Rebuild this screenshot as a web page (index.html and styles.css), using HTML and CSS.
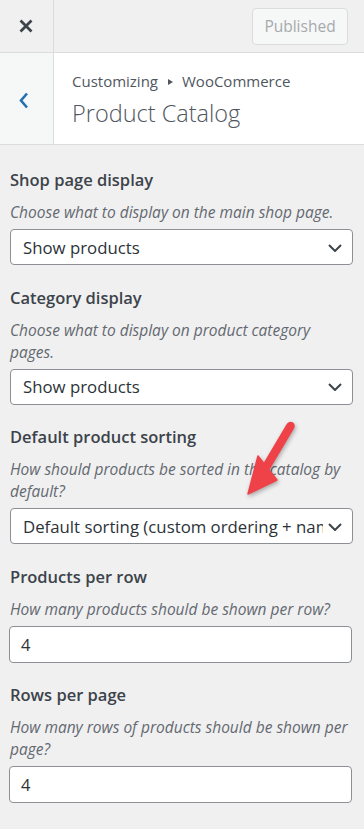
FILE: index.html
```html
<!DOCTYPE html>
<html lang="en">
<head>
<meta charset="utf-8">
<title>Product Catalog</title>
<link rel="stylesheet" href="styles.css">
</head>
<body>
<div class="topbar">
  <button class="close" aria-label="Close">
    <svg width="14" height="14" viewBox="0 0 14 14"><path d="M1.5 1.5 L12.5 12.5 M12.5 1.5 L1.5 12.5" stroke="#3c434a" stroke-width="2.8" fill="none"/></svg>
  </button>
  <div class="topbar-fill"></div>
  <button class="published" disabled>Published</button>
</div>
<div class="section-head">
  <button class="back" aria-label="Back">
    <svg width="10" height="17" viewBox="0 0 10 17"><path d="M8 1.5 L2 8.5 L8 15.5" stroke="#2271b1" stroke-width="2.6" fill="none"/></svg>
  </button>
  <div class="head-titles">
    <span class="action">Customizing<span class="crumb-sep"></span>WooCommerce</span>
    <h3 class="section-title">Product Catalog</h3>
  </div>
</div>
<div class="controls">
  <div class="control">
    <span class="control-title">Shop page display</span>
    <span class="control-desc">Choose what to display on the main shop page.</span>
    <div class="select"><span class="select-text">Show products</span><svg class="chev" width="14" height="8" viewBox="0 0 14 8"><path d="M1 1 L7 7 L13 1" stroke="#3c434a" stroke-width="2" fill="none"/></svg></div>
  </div>
  <div class="control">
    <span class="control-title">Category display</span>
    <span class="control-desc">Choose what to display on product category pages.</span>
    <div class="select"><span class="select-text">Show products</span><svg class="chev" width="14" height="8" viewBox="0 0 14 8"><path d="M1 1 L7 7 L13 1" stroke="#3c434a" stroke-width="2" fill="none"/></svg></div>
  </div>
  <div class="control">
    <span class="control-title">Default product sorting</span>
    <span class="control-desc">How should products be sorted in the catalog by default?</span>
    <div class="select"><span class="select-text">Default sorting (custom ordering + name)</span><svg class="chev" width="14" height="8" viewBox="0 0 14 8"><path d="M1 1 L7 7 L13 1" stroke="#3c434a" stroke-width="2" fill="none"/></svg></div>
  </div>
  <div class="control">
    <span class="control-title">Products per row</span>
    <span class="control-desc">How many products should be shown per row?</span>
    <div class="input">4</div>
  </div>
  <div class="control">
    <span class="control-title">Rows per page</span>
    <span class="control-desc">How many rows of products should be shown per page?</span>
    <div class="input">4</div>
  </div>
</div>
<svg class="annotation" width="364" height="829" viewBox="0 0 364 829">
  <path d="M290.5 426 L265 469" stroke="#ef4148" stroke-width="8.5" stroke-linecap="round" fill="none"/>
  <path d="M258 456 L277 480 L248 494 Z" fill="#ef4148" stroke="#ef4148" stroke-width="1.5" stroke-linejoin="round"/>
</svg>
</body>
</html>
```
FILE: styles.css
```css
* { box-sizing: border-box; }
html, body { margin: 0; padding: 0; }
body {
  position: relative;
  width: 364px;
  min-height: 829px;
  background: #f0f0f1;
  font-family: "Open Sans", "Noto Sans", sans-serif;
  color: #3c434a;
}
.topbar {
  display: flex;
  align-items: center;
  height: 53px;
  border-bottom: 1px solid #dcdcde;
  background: #f0f0f1;
}
.close {
  width: 54px;
  height: 52px;
  padding: 0;
  border: 0;
  border-right: 1px solid #dcdcde;
  background: transparent;
  display: flex;
  align-items: center;
  justify-content: center;
  padding-right: 2px;
}
.close svg { display: block; }
.topbar-fill { flex: 1; }
.published {
  margin-right: 16px;
  height: 37px;
  width: 96px;
  padding: 0;
  border: 1px solid #dcdcde;
  border-radius: 4px;
  background: #f6f7f7;
  color: #a7aaad;
  font-family: inherit;
  font-size: 15.5px;
}
.section-head {
  display: flex;
  height: 92px;
  border-bottom: 1px solid #dcdcde;
  background: #fff;
}
.back {
  width: 54px;
  padding: 0;
  border: 0;
  border-right: 1px solid #dcdcde;
  background: #f6f7f7;
  display: flex;
  align-items: center;
  justify-content: center;
  padding-right: 6px;
}
.back svg { display: block; margin-top: 3px; }
.head-titles {
  padding: 17px 0 0 18px;
  display: flex;
  flex-direction: column;
}
.action {
  font-size: 15px;
  line-height: 22px;
  color: #50575e;
  display: flex;
  align-items: center;
}
.crumb-sep {
  display: inline-block;
  width: 0;
  height: 0;
  margin: 1px 9px 0 10px;
  border-left: 5px solid #50575e;
  border-top: 3px solid transparent;
  border-bottom: 3px solid transparent;
}
.section-title {
  margin: 3px 0 0;
  font-size: 23.5px;
  line-height: 36px;
  font-weight: 300;
  color: #50575e;
}
.controls {
  padding: 21px 11px 0 10px;
}
.control {
  display: flex;
  flex-direction: column;
  margin-bottom: 18.5px;
}
.control-title {
  font-size: 16.5px;
  line-height: 28px;
  font-weight: 600;
  color: #3c434a;
  margin-bottom: 7px;
}
.control-desc {
  font-size: 15.5px;
  line-height: 22px;
  font-style: italic;
  color: #646970;
  margin-bottom: 6px;
}
.select {
  display: flex;
  align-items: center;
  height: 36px;
  padding: 0 10px 0 12px;
  background: #fff;
  border: 1px solid #8c8f94;
  border-radius: 4px;
  color: #2c3338;
  font-size: 16.8px;
}
.select-text {
  flex: 1;
  min-width: 0;
  overflow: hidden;
  white-space: nowrap;
  margin-right: 5px;
}
.chev { display: block; flex: none; margin-top: 1px; }
.input {
  height: 37px;
  margin-left: -1px;
  margin-right: 1px;
  padding: 0 11px;
  display: flex;
  align-items: center;
  background: #fff;
  border: 1px solid #8c8f94;
  border-radius: 4px;
  color: #2c3338;
  font-size: 16.5px;
}
.annotation {
  position: absolute;
  left: 0;
  top: 0;
  pointer-events: none;
  filter: drop-shadow(1px 2px 2px rgba(0, 0, 0, 0.3));
}
```
